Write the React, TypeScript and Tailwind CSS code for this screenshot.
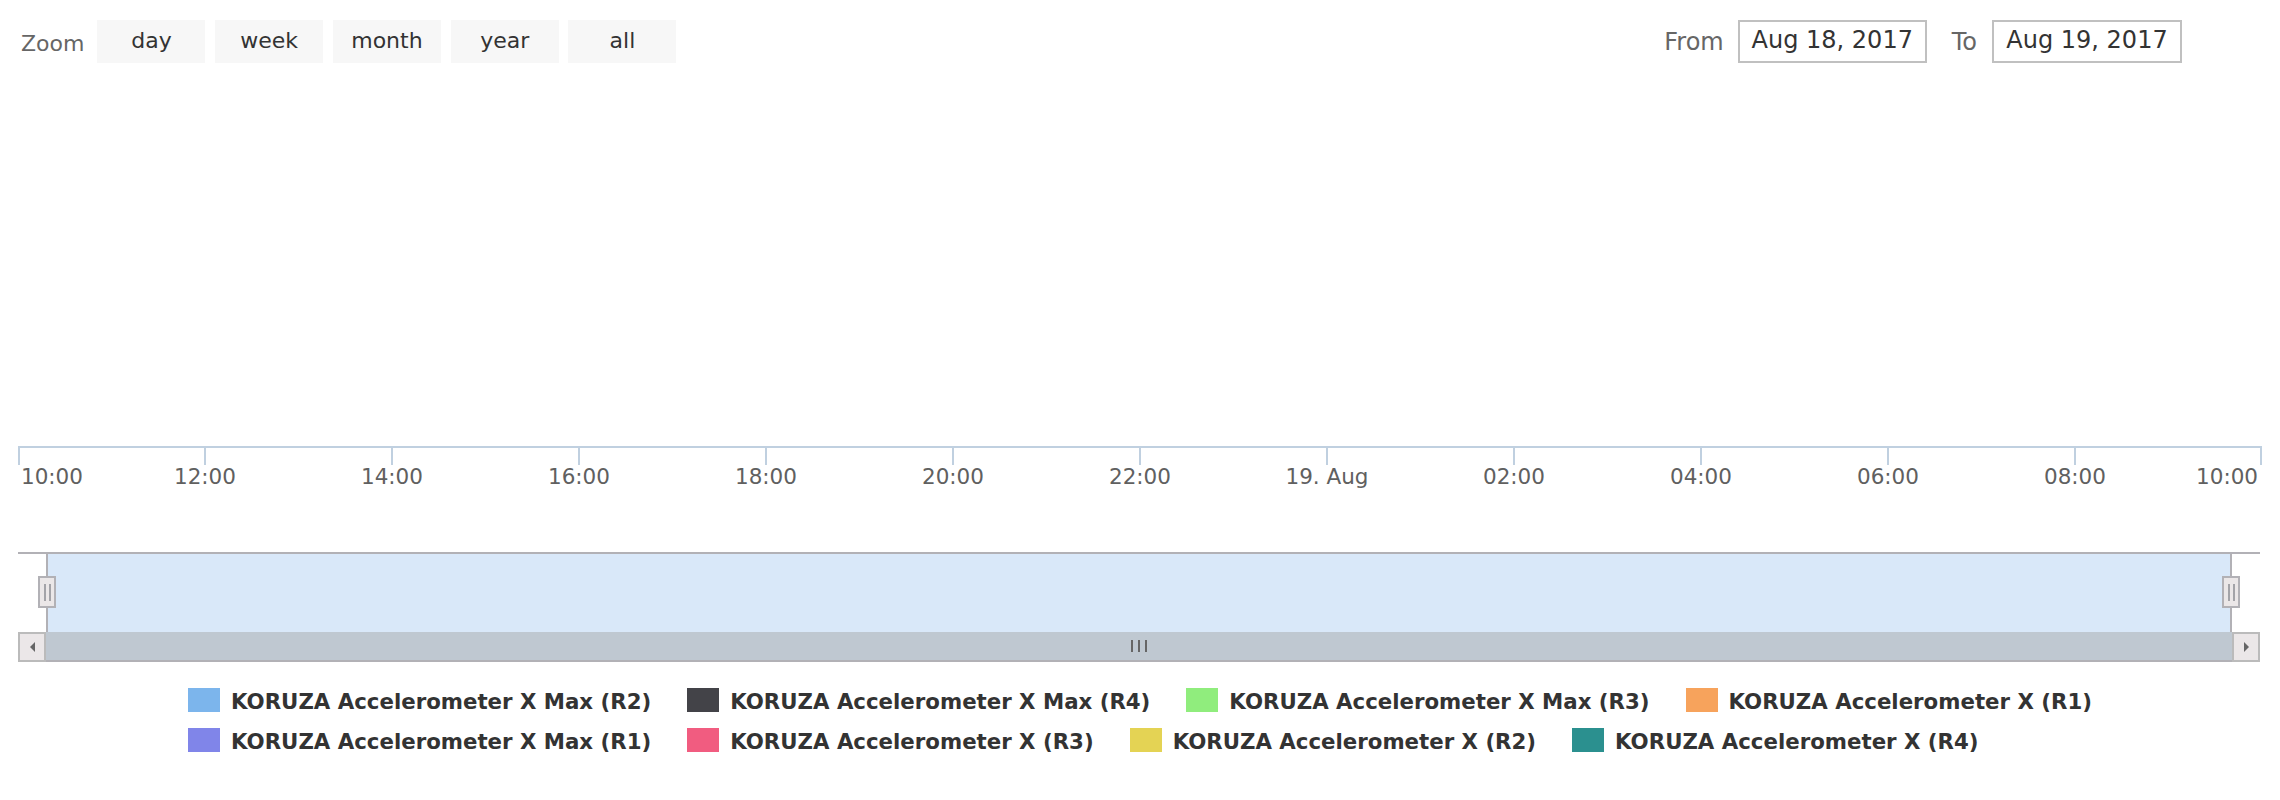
const zoomButtons = ['day', 'week', 'month', 'year', 'all']

const tickLabels = [
  '10:00', '12:00', '14:00', '16:00', '18:00', '20:00', '22:00',
  '19. Aug', '02:00', '04:00', '06:00', '08:00', '10:00',
]

const legendRows = [
  [
    { name: 'KORUZA Accelerometer X Max (R2)', color: 'bg-[#7cb5ec]' },
    { name: 'KORUZA Accelerometer X Max (R4)', color: 'bg-[#434348]' },
    { name: 'KORUZA Accelerometer X Max (R3)', color: 'bg-[#90ed7d]' },
    { name: 'KORUZA Accelerometer X (R1)', color: 'bg-[#f7a35c]' },
  ],
  [
    { name: 'KORUZA Accelerometer X Max (R1)', color: 'bg-[#8085e9]' },
    { name: 'KORUZA Accelerometer X (R3)', color: 'bg-[#f15c80]' },
    { name: 'KORUZA Accelerometer X (R2)', color: 'bg-[#e4d354]' },
    { name: 'KORUZA Accelerometer X (R4)', color: 'bg-[#2b908f]' },
  ],
]

const AXIS_LEFT = 18
const TICK_STEP = 187

function XAxis() {
  return (
    <svg width={2280} height={50} className="block">
      <line x1={AXIS_LEFT} y1={1} x2={AXIS_LEFT + TICK_STEP * 12} y2={1} stroke="#c0d0e0" strokeWidth={2} />
      {tickLabels.map((label, i) => {
        const x = AXIS_LEFT + TICK_STEP * i
        const first = i === 0
        const last = i === tickLabels.length - 1
        const tx = first ? x + 1 : last ? x - 1 : x
        return (
          <g key={i}>
            <line x1={tx} y1={0} x2={tx} y2={19} stroke="#c0d0e0" strokeWidth={2} />
            <text
              x={first ? x + 3 : last ? x - 4 : x}
              y={38}
              textAnchor={first ? 'start' : last ? 'end' : 'middle'}
              fill="#606060"
              fontSize={21.5}
              fontFamily="DejaVu Sans, sans-serif"
            >
              {label}
            </text>
          </g>
        )
      })}
    </svg>
  )
}

function Handle({ className }: { className: string }) {
  return (
    <div className={`absolute top-[24px] w-[18px] h-[32px] bg-[#ebe7e8] border-2 border-[#b2b1b6] flex items-center justify-center gap-[3px] ${className}`}>
      <span className="w-[2px] h-[17px] bg-[#a3a3a8]" />
      <span className="w-[2px] h-[17px] bg-[#a3a3a8]" />
    </div>
  )
}

function ArrowButton({ dir }: { dir: 'left' | 'right' }) {
  return (
    <div className="w-[28px] h-full bg-[#ebe7e8] border-2 border-[#bbbbbb] flex items-center justify-center">
      <svg width={5} height={10} viewBox="0 0 5 10">
        <polygon points={dir === 'left' ? '5,0 5,10 0,5' : '0,0 0,10 5,5'} fill="#666666" />
      </svg>
    </div>
  )
}

function Navigator() {
  return (
    <div className="relative ml-[18px] w-[2242px] mt-[56px]">
      <div className="flex h-[80px] border-t-2 border-[#b2b1b6]">
        <div className="w-[28px]" />
        <div className="flex-1 bg-[#d9e8f9] border-x-2 border-[#b2b1b6]" />
        <div className="w-[28px]" />
      </div>
      <div className="flex h-[30px]">
        <ArrowButton dir="left" />
        <div className="flex-1 bg-[#bfc8d1] border-b-2 border-[#b2b1b6] flex items-center justify-center gap-[4.5px] pb-[1px]">
          <span className="w-[2.5px] h-[12px] bg-[#666666]" />
          <span className="w-[2.5px] h-[12px] bg-[#666666]" />
          <span className="w-[2.5px] h-[12px] bg-[#666666]" />
        </div>
        <ArrowButton dir="right" />
      </div>
      <Handle className="left-[20px]" />
      <Handle className="left-[2204px]" />
    </div>
  )
}

export default function App() {
  return (
    <div className="w-[2280px] h-[800px] bg-white overflow-hidden font-['DejaVu_Sans',sans-serif]">
      <div className="flex items-center justify-between h-[43px] mt-[20px] pl-[21px] pr-[98px]">
        <div className="flex items-center h-full">
          <span className="text-[22px] text-[#666666] mr-[13px] pt-[4px]">Zoom</span>
          <div className="flex gap-[9.75px] h-full">
            {zoomButtons.map((b) => (
              <button
                key={b}
                className="w-[108px] h-full bg-[#f7f7f7] text-[#333333] text-[22px] flex items-center justify-center pb-[2px]"
              >
                {b}
              </button>
            ))}
          </div>
        </div>
        <div className="flex items-center h-full">
          <span className="text-[24px] text-[#666666] mr-[14px]">From</span>
          <div className="w-[189px] h-full border-2 border-[#c0c0c0] text-[#333333] text-[24px] flex items-center justify-center pb-[3px]">
            Aug 18, 2017
          </div>
          <span className="text-[24px] text-[#666666] ml-[25px] mr-[15px]">To</span>
          <div className="w-[190px] h-full border-2 border-[#c0c0c0] text-[#333333] text-[24px] flex items-center justify-center pb-[3px]">
            Aug 19, 2017
          </div>
        </div>
      </div>

      <div className="mt-[383px]">
        <XAxis />
      </div>

      <Navigator />

      <div className="mt-[26px] flex justify-center">
        <div className="flex flex-col gap-[16px]">
          {legendRows.map((row, r) => (
            <div key={r} className="flex h-[24px]">
              {row.map((item, i) => (
                <div key={item.name} className={`flex items-center h-[24px] ${i < row.length - 1 ? 'mr-[36px]' : ''}`}>
                  <span className={`w-[32px] h-[24px] mr-[11px] ${item.color}`} />
                  <span className="text-[21.3px] font-bold text-[#333333] leading-[24px] translate-y-[2px]">{item.name}</span>
                </div>
              ))}
            </div>
          ))}
        </div>
      </div>
    </div>
  )
}
